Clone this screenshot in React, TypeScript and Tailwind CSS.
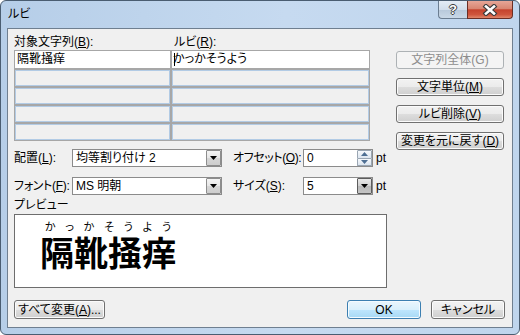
import type { ReactNode } from "react";

type BtnProps = {
  children: ReactNode;
  className?: string;
  disabled?: boolean;
  primary?: boolean;
};

function Btn({ children, className = "", disabled, primary }: BtnProps) {
  let look =
    "border-[#707070] bg-[linear-gradient(180deg,#f2f2f2_0%,#ebebeb_50%,#dddddd_51%,#cfcfcf_100%)] shadow-[inset_0_0_0_1px_#fbfbfb] text-black";
  if (disabled) look = "border-[#adb2b5] bg-[#f4f4f4] text-[#8d8d8d]";
  if (primary)
    look =
      "border-[#3c7fb1] bg-[linear-gradient(180deg,#eaf6fd_0%,#d9f0fc_50%,#bee6fd_51%,#a7d9f5_100%)] shadow-[inset_0_0_0_1px_#f4fbff] text-black";
  return (
    <div
      className={`flex items-center justify-center whitespace-nowrap rounded-[3px] border leading-[14px] ${look} ${className}`}
    >
      {children}
    </div>
  );
}

function Arrow({ dark }: { dark?: boolean }) {
  return (
    <span
      className={`flex h-full w-[15px] items-center justify-center rounded-[1px] border ${
        dark
          ? "border-[#5c5c5c] bg-[linear-gradient(180deg,#e8e8e8_0%,#cfcfcf_50%,#b9b9b9_51%,#c4c4c4_100%)]"
          : "border-[#8d8d8d] bg-[linear-gradient(180deg,#f4f4f4_0%,#e6e6e6_50%,#d6d6d6_51%,#cdcdcd_100%)]"
      }`}
    >
      <svg width="7" height="4" viewBox="0 0 7 4">
        <path d="M0 0h7L3.5 4z" fill="#000" />
      </svg>
    </span>
  );
}

function Combo({ value, className, dark }: { value: string; className: string; dark?: boolean }) {
  return (
    <div className={`flex h-[18px] shrink-0 items-center border border-[#8b8b8b] bg-white ${className}`}>
      <span className="flex-1 whitespace-nowrap pl-[3px] leading-[14px]">{value}</span>
      <Arrow dark={dark} />
    </div>
  );
}

function Spin({ value }: { value: string }) {
  return (
    <div className="flex h-[18px] w-[70px] shrink-0 items-center border border-[#8b8b8b] bg-white">
      <span className="flex-1 pl-[3px] leading-[14px]">{value}</span>
      <div className="flex h-full w-[15px] flex-col">
        <span className="flex flex-1 items-center justify-center rounded-t-[1px] border border-[#9aa6b3] bg-[linear-gradient(180deg,#f6f9fc,#dce5ef)]">
          <svg width="7" height="4" viewBox="0 0 7 4">
            <path d="M0 4h7L3.5 0z" fill="#4e6f93" />
          </svg>
        </span>
        <span className="flex flex-1 items-center justify-center rounded-b-[1px] border border-t-0 border-[#9aa6b3] bg-[linear-gradient(180deg,#f6f9fc,#dce5ef)]">
          <svg width="7" height="4" viewBox="0 0 7 4">
            <path d="M0 0h7L3.5 4z" fill="#4e6f93" />
          </svg>
        </span>
      </div>
    </div>
  );
}

export default function App() {
  const emptyCells = Array.from({ length: 8 });
  const ruby = ["か", "っ", "か", "そ", "う", "よ", "う"];

  return (
    <div className="h-[335px] w-[520px] bg-white font-['Liberation_Sans','Noto_Sans_CJK_JP',sans-serif] text-[12px] text-black [font-feature-settings:'palt']">
      <div className="flex h-full w-full flex-col rounded-[6px] border border-[#4a5d71] bg-[linear-gradient(90deg,#b6cee8_0%,#c6daf0_55%,#bfd5ed_100%)]">
        {/* title bar */}
        <div className="flex h-[27px] shrink-0 items-start">
          <span className="ml-[7px] mt-[6px] leading-[14px]">ルビ</span>
          <div className="ml-auto mr-[6px] flex">
            <div className="flex h-[18px] w-[29px] items-center justify-center rounded-bl-[4px] border border-t-0 border-r-0 border-[#6b7d91] bg-[linear-gradient(180deg,#e4ecf5_0%,#d2deeb_50%,#b7c8da_51%,#c9d8e7_100%)]">
              <span className="text-[13px] font-bold leading-[14px] text-white [text-shadow:1px_0_0_#3b3b3b,-1px_0_0_#3b3b3b,0_1px_0_#3b3b3b,0_-1px_0_#3b3b3b]">
                ?
              </span>
            </div>
            <div className="flex h-[18px] w-[46px] items-center justify-center rounded-br-[4px] border border-t-0 border-[#6b2e24] bg-[linear-gradient(180deg,#e6a697_0%,#d88672_45%,#c5432d_52%,#cf553c_80%,#e0866a_100%)]">
              <svg width="16" height="12" viewBox="0 0 16 12">
                <path d="M4 2.5L12 9.5M12 2.5L4 9.5" stroke="#3a3a3a" strokeWidth="4.8" strokeLinecap="square" />
                <path d="M4 2.5L12 9.5M12 2.5L4 9.5" stroke="#fff" strokeWidth="2.6" strokeLinecap="square" />
              </svg>
            </div>
          </div>
        </div>

        {/* client area */}
        <div className="mx-[6px] flex h-[300px] shrink-0 flex-col border border-[#6f7f90] bg-[#f0f0f0]">
          <div className="flex">
            {/* left column */}
            <div className="ml-[6px] flex w-[373px] flex-col">
              <div className="mt-[6px] flex h-[14px] whitespace-nowrap leading-[14px]">
                <span className="w-[160px]">
                  対象文字列(<u>B</u>):
                </span>
                <span>
                  ルビ(<u>R</u>):
                </span>
              </div>

              <div className="mt-px grid w-[356px] grid-cols-[155px_197px] grid-rows-[17px_16px_16px_16px_16px] gap-[2px] border border-[#a7a7a7] bg-[#a7a7a7]">
                <div className="bg-white pl-[2px] leading-[17px]">隔靴掻痒</div>
                <div className="relative bg-white pl-[1px] leading-[17px]">
                  かっかそうよう
                  <span className="absolute left-[2px] top-[2px] h-[13px] w-px bg-black" />
                </div>
                {emptyCells.map((_, i) => (
                  <div key={i} className="border border-[#b2cbe5] bg-[#f0f0f0]" />
                ))}
              </div>

              <div className="mt-[8px] flex h-[18px] items-center whitespace-nowrap">
                <span className="w-[58px] shrink-0 leading-[14px]">
                  配置(<u>L</u>):
                </span>
                <Combo value="均等割り付け 2" className="w-[150px]" />
                <span className="ml-[11px] w-[70px] shrink-0 leading-[14px] tracking-[-0.4px]">
                  オフセット(<u>O</u>):
                </span>
                <Spin value="0" />
                <span className="ml-[3px] leading-[14px]">pt</span>
              </div>

              <div className="mt-[10px] flex h-[18px] items-center whitespace-nowrap">
                <span className="w-[58px] shrink-0 leading-[14px] tracking-[-0.3px]">
                  フォント(<u>F</u>):
                </span>
                <Combo value="MS 明朝" className="w-[150px]" />
                <span className="ml-[11px] w-[70px] shrink-0 leading-[14px]">
                  サイズ(<u>S</u>):
                </span>
                <Combo value="5" className="w-[70px]" dark />
                <span className="ml-[3px] leading-[14px]">pt</span>
              </div>

              <span className="mt-[3px] h-[14px] leading-[14px]">プレビュー</span>

              <div className="mt-[2px] h-[74px] w-[373px] border border-[#6d6d6d] bg-white pl-[25px] pt-[3px]">
                <div className="inline-flex flex-col">
                  <div className="flex h-[13px] justify-around text-[11px] leading-[13px]">
                    {ruby.map((c, i) => (
                      <span key={i}>{c}</span>
                    ))}
                  </div>
                  <div className="h-[36px] font-['Noto_Sans_CJK_JP',sans-serif] text-[34px] font-bold leading-[36px] [font-feature-settings:normal]">
                    隔靴掻痒
                  </div>
                </div>
              </div>
            </div>

            {/* right column */}
            <div className="ml-[9px] mt-[22px] flex w-[108px] flex-col gap-[9px]">
              <Btn className="h-[18px]" disabled>
                文字列全体(G)
              </Btn>
              <Btn className="h-[18px]">
                文字単位(<u>M</u>)
              </Btn>
              <Btn className="h-[18px]">
                ルビ削除(<u>V</u>)
              </Btn>
              <Btn className="h-[18px]">
                変更を元に戻す(<u>D</u>)
              </Btn>
            </div>
          </div>

          {/* bottom buttons */}
          <div className="mt-[12px] flex pl-[6px] pr-[7px]">
            <Btn className="h-[19px] w-[91px]">
              すべて変更(<u>A</u>)...
            </Btn>
            <Btn className="ml-auto h-[19px] w-[74px]" primary>
              OK
            </Btn>
            <Btn className="ml-[10px] h-[19px] w-[74px]">キャンセル</Btn>
          </div>
        </div>
      </div>
    </div>
  );
}
